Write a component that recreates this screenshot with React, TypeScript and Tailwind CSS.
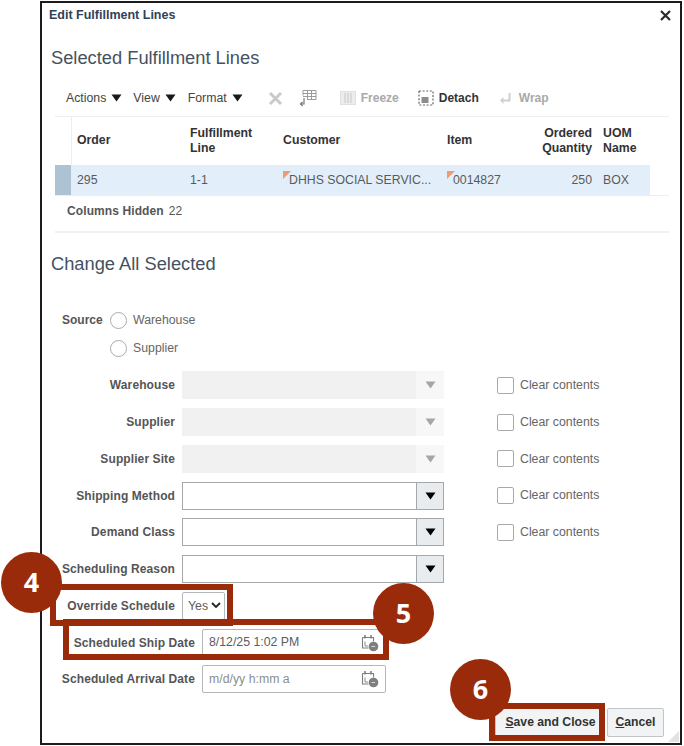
const font = "font-['Liberation_Sans',Arial,sans-serif]";

// Small filled triangle used by the menus and dropdown buttons
function Caret({ className }: { className: string }) {
  return (
    <svg width="11" height="8" viewBox="0 0 11 8" className={className}>
      <path d="M0.5 0.5h10L5.5 7.5z" fill="currentColor" />
    </svg>
  );
}

function Menu({ label, className }: { label: string; className: string }) {
  return (
    <div className={`flex items-center gap-[5px] ${className}`}>
      <span>{label}</span>
      <Caret className="text-[#1a1a1a]" />
    </div>
  );
}

function CalendarClock() {
  return (
    <svg width="18" height="18" viewBox="0 0 18 18" fill="none">
      <path d="M4 1v3.5M10 1v3.5" stroke="#6f6f6f" strokeWidth="1.4" />
      <path d="M1.5 3.5h11v4M1.5 3.5v10.5h6" stroke="#7d7d7d" strokeWidth="1.1" />
      <path d="M4 7.5v4.5h3" stroke="#8a8a8a" strokeWidth="1" />
      <circle cx="12.5" cy="12.5" r="4.8" fill="#7c7f82" />
      <path d="M10.5 12.5h3.6" stroke="#d8d8d8" strokeWidth="1" />
    </svg>
  );
}

function ClearContents() {
  return (
    <div className="ml-[53px] flex items-center">
      <div className="h-[17px] w-[17px] rounded-[2px] border border-[#a9a9a9] bg-white" />
      <span className="ml-[6px] text-[12.3px] text-[#666]">Clear contents</span>
    </div>
  );
}

function Label({ children, wide }: { children: string; wide?: boolean }) {
  return (
    <div
      className={`shrink-0 whitespace-nowrap text-right text-[12px] font-bold tracking-[0.1px] text-[#555] ${
        wide ? 'w-[153px]' : 'w-[133px]'
      }`}
    >
      {children}
    </div>
  );
}

function SelectRow({ label, disabled }: { label: string; disabled?: boolean }) {
  return (
    <div className="flex h-[36.75px] items-center">
      <Label>{label}</Label>
      {disabled ? (
        <div className="ml-[7px] flex h-[28px] w-[262px] bg-[#f1f1f1]">
          <div className="flex-1" />
          <div className="flex w-[28px] items-center justify-center bg-[#f7f7f7]">
            <Caret className="text-[#a6a6a6]" />
          </div>
        </div>
      ) : (
        <div className="ml-[7px] flex h-[28px] w-[262px] border border-[#a4a8aa] bg-white">
          <div className="flex-1" />
          <div className="flex w-[27px] items-center justify-center border-l border-[#a4a8aa] bg-[#e8ecee]">
            <Caret className="text-black" />
          </div>
        </div>
      )}
      {label !== 'Scheduling Reason' && <ClearContents />}
    </div>
  );
}

function DateRow({ label, value, placeholder }: { label: string; value: string; placeholder?: boolean }) {
  return (
    <div className="flex h-[36.75px] items-center">
      <Label wide>{label}</Label>
      <div className="ml-[7px] flex h-[28px] w-[184px] items-center justify-between rounded-[2px] border border-[#b4b8ba] bg-white pl-[6px] pr-[6px]">
        <span className={`text-[12.3px] ${placeholder ? 'text-[#8d8d8d]' : 'text-[#5c5c5c]'}`}>{value}</span>
        <CalendarClock />
      </div>
    </div>
  );
}

function Callout({ n, className }: { n: number; className: string }) {
  return (
    <div
      className={`absolute flex h-[61px] w-[61px] items-center justify-center rounded-full bg-[#992b0b] font-['Open_Sans',sans-serif] text-[27px] font-bold text-white ${className}`}
    >
      {n}
    </div>
  );
}

export default function App() {
  return (
    <div className={`relative h-[746px] w-[684px] overflow-hidden bg-white pb-[1px] pl-[40px] pr-[2px] pt-[1px] ${font}`}>
      <div className="flex h-full flex-col border-2 border-[#1c1c1c] bg-white">
        {/* Title */}
        <div className="flex h-[25px] items-center justify-between pl-[7px] pr-[9px]">
          <span className="text-[12.5px] font-bold text-[#2f4359]">Edit Fulfillment Lines</span>
          <svg width="11" height="11" viewBox="0 0 11 11">
            <path d="M1 1l9 9M10 1l-9 9" stroke="#2b2b2b" strokeWidth="2.2" />
          </svg>
        </div>

        <h2 className="ml-[9px] mt-[18px] text-[18.3px] leading-[24px] text-[#44525f]">Selected Fulfillment Lines</h2>

        {/* Toolbar */}
        <div className="mt-[16px] flex h-[24px] items-center pl-[24px] text-[12.3px] text-[#444]">
          <Menu label="Actions" className="" />
          <Menu label="View" className="ml-[11px]" />
          <Menu label="Format" className="ml-[12px]" />
          <svg width="15" height="15" viewBox="0 0 15 15" className="ml-[25px]">
            <path d="M2 2l11 11M13 2L2 13" stroke="#c9c9c9" strokeWidth="3" />
          </svg>
          <svg width="18" height="18" viewBox="0 0 18 18" className="ml-[16px]" fill="none">
            <path d="M4 1.5h13v9H8M4 1.5v5M4 4.5h13M8.5 1.5v9M12.5 1.5v9M4 7.5h13" stroke="#9a9a9a" strokeWidth="1" />
            <path d="M5 9v6H1.5M3.5 13l-2 2 2 2" stroke="#777" strokeWidth="1.2" />
          </svg>
          <svg width="16" height="16" viewBox="0 0 16 16" className="ml-[23px]" fill="none">
            <rect x="0.5" y="1.5" width="15" height="13" fill="#ececec" stroke="#e0e0e0" />
            <path d="M5 3v10M8 3v10M11 3v10" stroke="#c8c8c8" />
          </svg>
          <span className="ml-[5px] text-[12px] font-bold text-[#a9a9a9]">Freeze</span>
          <svg width="16" height="16" viewBox="0 0 16 16" className="ml-[19px]" fill="none">
            <rect x="1" y="1" width="14" height="14" stroke="#666" strokeWidth="1.2" strokeDasharray="2 1.6" />
            <rect x="3.5" y="7" width="7" height="6" fill="#8d8d8d" />
          </svg>
          <span className="ml-[5px] text-[12px] font-bold text-[#333]">Detach</span>
          <svg width="13" height="13" viewBox="0 0 13 13" className="ml-[20px]" fill="none">
            <path d="M10.5 1v7.5H3" stroke="#cfcfcf" strokeWidth="2" />
            <path d="M4.5 5L1 8.5 4.5 12z" fill="#cfcfcf" />
          </svg>
          <span className="ml-[7px] text-[12px] font-bold text-[#a9a9a9]">Wrap</span>
        </div>

        {/* Table */}
        <div className="ml-[13px] mr-[11px] mt-[6px] border-t border-[#eeeeee]">
          <div className="grid h-[48px] grid-cols-[135px_93px_164px_145px_1fr] items-center text-[12.3px] font-bold leading-[15.5px] text-[#333]">
            <div className="ml-[16px] flex h-full items-center border-l border-[#eeeeee] pl-[5px]">Order</div>
            <div>Fulfillment<br />Line</div>
            <div>Customer</div>
            <div className="flex items-center justify-between">
              <span>Item</span>
              <span className="text-right">Ordered<br />Quantity</span>
            </div>
            <div className="pl-[11px]">UOM<br />Name</div>
          </div>
          <div className="border-b border-[#eeeeee]">
            <div className="mr-[19px] grid h-[30px] grid-cols-[135px_93px_164px_145px_1fr] items-center bg-[#e2effb] text-[12.3px] text-[#5a5a5a]">
              <div className="flex h-full items-center">
                <div className="h-full w-[16px] bg-[#adc2d2]" />
                <span className="ml-[6px]">295</span>
              </div>
              <div>1-1</div>
              <div className="relative whitespace-nowrap pl-[6px]">
                <span className="absolute left-0 top-0 h-0 w-0 border-r-[8px] border-t-[8px] border-r-transparent border-t-[#ee9a72]" />
                DHHS SOCIAL SERVIC...
              </div>
              <div className="relative flex justify-between">
                <span className="absolute left-0 top-0 h-0 w-0 border-r-[8px] border-t-[8px] border-r-transparent border-t-[#ee9a72]" />
                <span className="pl-[6px]">0014827</span>
                <span>250</span>
              </div>
              <div className="pl-[11px]">BOX</div>
            </div>
          </div>
        </div>

        <div className="ml-[25px] mt-[7px] text-[12px] leading-[16px] text-[#555]">
          <span className="font-bold tracking-[0.1px]">Columns Hidden</span>
          <span className="ml-[5px]">22</span>
        </div>

        <div className="ml-[13px] mr-[11px] mt-[12px] border-t-2 border-[#f0f0f0]" />

        <h2 className="ml-[9px] mt-[19px] text-[18.3px] leading-[24px] text-[#44525f]">Change All Selected</h2>

        {/* Source radios */}
        <div className="mt-[30px] flex h-[28px] items-center pl-[20px]">
          <span className="w-[48px] text-[12px] font-bold text-[#555]">Source</span>
          <div className="h-[17px] w-[17px] rounded-full border border-[#aaa]" />
          <span className="ml-[6px] text-[12.3px] text-[#666]">Warehouse</span>
        </div>
        <div className="flex h-[28px] items-center pl-[68px]">
          <div className="h-[17px] w-[17px] rounded-full border border-[#aaa]" />
          <span className="ml-[6px] text-[12.3px] text-[#666]">Supplier</span>
        </div>

        {/* Form rows */}
        <div className="mt-[5px]">
          <SelectRow label="Warehouse" disabled />
          <SelectRow label="Supplier" disabled />
          <SelectRow label="Supplier Site" disabled />
          <SelectRow label="Shipping Method" />
          <SelectRow label="Demand Class" />
          <SelectRow label="Scheduling Reason" />
          <div className="flex h-[36.75px] items-center">
            <Label>Override Schedule</Label>
            <div className="ml-[7px] flex h-[28px] w-[43px] items-center gap-[3px] rounded-[2px] border border-[#b4b8ba] pl-[5px] text-[12.3px] text-[#5c5c5c]">
              <span>Yes</span>
              <svg width="10" height="7" viewBox="0 0 10 7" fill="none">
                <path d="M1 1l4 4 4-4" stroke="#222" strokeWidth="1.8" />
              </svg>
            </div>
          </div>
          <DateRow label="Scheduled Ship Date" value="8/12/25 1:02 PM" />
          <DateRow label="Scheduled Arrival Date" value="m/d/yy h:mm a" placeholder />
        </div>

        {/* Footer */}
        <div className="relative mt-auto flex justify-end gap-[7px] pb-[6px] pr-[16px]">
          <button className="h-[29px] w-[105px] rounded-[2px] border border-[#c0c5c8] bg-[#f1f3f4] pl-[6px] text-[12.2px] font-bold text-[#333]">
            <span className="underline">S</span>ave and Close
          </button>
          <button className="h-[29px] w-[57px] rounded-[2px] border border-[#c0c5c8] bg-[#f1f3f4] text-[12.2px] font-bold text-[#333]">
            <span className="underline">C</span>ancel
          </button>
          <svg width="11" height="11" viewBox="0 0 11 11" className="absolute bottom-[1px] right-[1px]">
            <path d="M11 0v11H0z" fill="#e2e2e2" />
          </svg>
        </div>
      </div>

      {/* Red annotation boxes and number badges */}
      <div className="absolute left-[50px] top-[584px] h-[42px] w-[183px] border-[6px] border-[#992b0b]" />
      <div className="absolute left-[63px] top-[619px] h-[41px] w-[326px] border-[6px] border-[#992b0b]" />
      <div className="absolute left-[489px] top-[703px] h-[38px] w-[116px] border-[6px] border-[#992b0b]" />
      <Callout n={4} className="left-[1px] top-[552px]" />
      <Callout n={5} className="left-[373px] top-[583px]" />
      <Callout n={6} className="left-[450px] top-[659px]" />
    </div>
  );
}
